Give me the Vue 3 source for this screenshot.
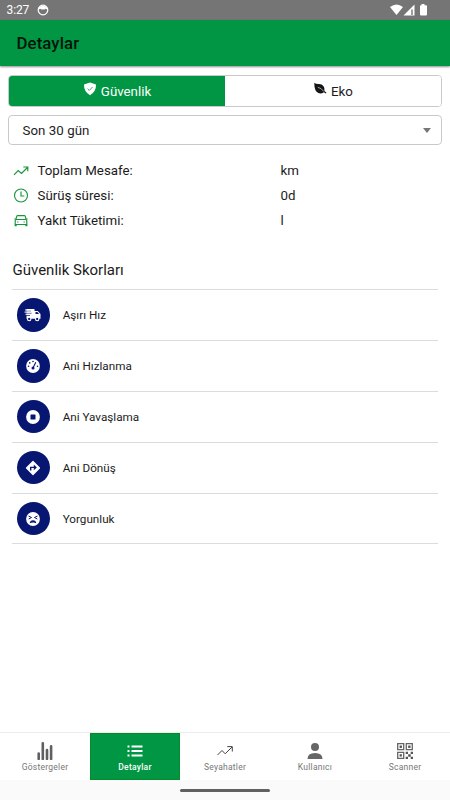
<script setup>
const stats = [
  { icon: 'trend', label: 'Toplam Mesafe:', value: 'km' },
  { icon: 'clock', label: 'Sürüş süresi:', value: '0d' },
  { icon: 'car', label: 'Yakıt Tüketimi:', value: 'l' },
]
const scores = [
  { icon: 'truck', label: 'Aşırı Hız' },
  { icon: 'gauge', label: 'Ani Hızlanma' },
  { icon: 'stop', label: 'Ani Yavaşlama' },
  { icon: 'turn', label: 'Ani Dönüş' },
  { icon: 'tired', label: 'Yorgunluk' },
]
const tabs = [
  { icon: 'bars', label: 'Göstergeler' },
  { icon: 'list', label: 'Detaylar', active: true },
  { icon: 'trend', label: 'Seyahatler' },
  { icon: 'user', label: 'Kullanıcı' },
  { icon: 'qr', label: 'Scanner' },
]
</script>

<template>
  <div class="screen">
    <div class="status">
      <span class="time">3:27</span>
      <svg class="face" viewBox="0 0 12 12"><circle cx="6" cy="6" r="4.800" fill="none" stroke="#fff" stroke-width="1.200" /><path d="M1.800 5.500V3.500Q6 -.2 10.200 3.500V5.500L8.500 4.700L7.500 5.400H4.500L3.500 4.700Z" fill="#fff" /></svg>
      <svg class="signals" viewBox="0 0 38 12">
        <path d="M0 3Q6.500-2 13 3L6.500 11Z" fill="#fff" />
        <path d="M13.500 11.500L24.500 .5V11.500Z" fill="#fff" /><path d="M21.300 5.500h1.400v5.500h-1.400z" fill="#757575" />
        <path d="M31.500 0h3v1.200H36q1 0 1 1V10.500q0 1-1 1h-5q-1 0-1-1V2.200q0-1 1-1h.5z" fill="#fff" />
      </svg>
    </div>
    <header class="appbar">Detaylar</header>

    <main>
      <div class="segments">
        <button class="segment on">
          <svg viewBox="0 0 14 14"><path d="M7 .5L13 2.500Q13.300 9.500 7 13.200Q.7 9.500 1 2.500Z" fill="#fff" /><path d="M4.600 6.800L6.300 8.400L9.600 5" fill="none" stroke="#009643" stroke-width=".8" /></svg>
          <span>Güvenlik</span>
        </button>
        <button class="segment">
          <svg viewBox="0 0 14 14"><path d="M1.300 .8Q2.500 2.200 6 2.100Q12 2.500 11.500 9.100L13.500 10.800L12.900 11.600L10.900 10.200Q7 13 3.500 9.700Q1.300 7.500 1.300 .8Z" fill="#151515" /><path d="M4.800 5.300Q8.500 6 10.800 9.500" fill="none" stroke="#fff" stroke-width=".6" /></svg>
          <span>Eko</span>
        </button>
      </div>

      <div class="select"><span>Son 30 gün</span><i class="caret"></i></div>

      <div class="stats">
        <div v-for="s in stats" :key="s.label" class="stat">
          <svg class="stat-icon" viewBox="0 0 16 16" fill="none" stroke="#16963c" stroke-width="1.150">
            <path v-if="s.icon === 'trend'" d="M1 11.800L5.200 7.500L8.500 10.500L14.500 4.500M10.300 4H14.800V8.300" />
            <template v-else-if="s.icon === 'clock'"><circle cx="8" cy="7.500" r="6.500" /><path d="M8 3.500V8H11.300" /></template>
            <template v-else><path d="M2.800 6.500L3.800 3.100Q4 2.600 4.600 2.600H11.400Q12 2.600 12.200 3.100L13.200 6.500M2.200 11.500V7.700L3.100 6.500H12.900L13.800 7.700V11.500Z" /><path d="M2.700 11.500V13.300M13.300 11.500V13.300" stroke-width="2" /><path d="M4.200 9h1.300M10.500 9h1.300M1.300 6H2.800M13.200 6H14.700" /></template>
          </svg>
          <span class="stat-label">{{ s.label }}</span>
          <span>{{ s.value }}</span>
        </div>
      </div>

      <h2>Güvenlik Skorları</h2>
      <ul class="scores">
        <li v-for="s in scores" :key="s.label">
          <span class="badge">
            <svg viewBox="0 0 18 18">
              <template v-if="s.icon === 'truck'">
                <path d="M2.500 3H10.500V5H13.700L16.500 8V12.700H2.500Z" fill="#fff" />
                <path d="M0 5h7M1 7.200h6.500M0 9.400h6" stroke="#071771" stroke-width=".8" />
                <path d="M1 4h6M.5 6.100h6.500M1.500 8.300h5" stroke="#fff" stroke-width="1" />
                <path d="M11.500 6.100h1.800l1.900 2h-3.700z" fill="#071771" />
                <circle cx="5.200" cy="13" r="1.700" fill="#071771" stroke="#fff" stroke-width="1.100" /><circle cx="13.200" cy="13" r="1.700" fill="#071771" stroke="#fff" stroke-width="1.100" />
              </template>
              <template v-else-if="s.icon === 'gauge'">
                <circle cx="9" cy="9" r="6.900" fill="#fff" /><g fill="#071771"><circle cx="9" cy="4.500" r=".8" /><circle cx="5.700" cy="5.900" r=".8" /><circle cx="4.500" cy="9.200" r=".8" /><circle cx="13.500" cy="9.200" r=".8" /><circle cx="9" cy="11" r="1.500" /></g><path d="M9 11L11.800 5.300" stroke="#071771" stroke-width="1.100" />
              </template>
              <template v-else-if="s.icon === 'stop'"><circle cx="9" cy="9" r="6.900" fill="#fff" /><rect x="6.500" y="6.500" width="5" height="5" rx=".5" fill="#071771" /></template>
              <template v-else-if="s.icon === 'turn'"><path d="M9 2.500L15.500 9L9 15.500L2.500 9Z" fill="#fff" stroke="#fff" stroke-width="1.200" stroke-linejoin="round" /><path d="M6.700 11.500V8.400H10.500" fill="none" stroke="#071771" stroke-width="1.400" /><path d="M9.800 5.600L12.900 8.400L9.800 11.200Z" fill="#071771" /></template>
              <template v-else><circle cx="9" cy="9" r="6.900" fill="#fff" /><path d="M4.500 6L7.500 7.500L4.700 9M13.500 6L10.500 7.500L13.300 9" fill="none" stroke="#071771" stroke-width="1" /><path d="M5.700 13.200Q6 10.200 9 10.200T12.300 13.200Q9 11.900 5.700 13.200Z" fill="#071771" /></template>
            </svg>
          </span>
          <span>{{ s.label }}</span>
        </li>
      </ul>
    </main>

    <nav>
      <a v-for="t in tabs" :key="t.label" :class="{ active: t.active }">
        <svg viewBox="0 0 18 18">
          <path v-if="t.icon === 'bars'" d="M2.700 17V11.500M6.800 17V1.300M11 17V8M15.100 17V4.200" stroke="#606060" stroke-width="2.600" stroke-linecap="round" />
          <path v-else-if="t.icon === 'list'" d="M1.500 4.500h2M1.500 9h2M1.500 13.500h2M5.500 4.500h11M5.500 9h11M5.500 13.500h11" stroke="#fff" stroke-width="1.800" />
          <path v-else-if="t.icon === 'trend'" d="M1.500 13L6 8.500L9.200 11.800L16 5M11.300 4.600H16.300V9.500" fill="none" stroke="#444" stroke-width="1" />
          <g v-else-if="t.icon === 'user'" fill="#666"><circle cx="9" cy="4.900" r="4" /><path d="M1.500 17Q1.500 11 9 11T16.500 17Z" /></g>
          <g v-else><path d="M1.700 1.700h6v6h-6zM10.300 1.700h6v6h-6zM1.700 10.300h6v6h-6z" fill="none" stroke="#666" stroke-width="1.300" /><path d="M3.600 3.600h2.300v2.300H3.600zM12.200 3.600h2.300v2.300h-2.300zM3.600 12.200h2.300v2.300H3.600zM9.700 9.700H12V12H9.700zM14.700 9.700H17V12h-2.300zM12.200 12.200h2.500v2.500h-2.500zM9.700 14.700H12V17H9.700zM14.700 14.700H17V17h-2.300z" fill="#555" /></g>
        </svg>
        <span>{{ t.label }}</span>
      </a>
    </nav>
    <footer><i></i></footer>
  </div>
</template>

<style>
body { margin: 0; }
</style>

<style scoped>
.screen { width: 450px; height: 800px; display: flex; flex-direction: column; background: #fff; color: #1c1c1c; font-family: Roboto, sans-serif; overflow: hidden; }
.status { height: 20px; background: #757575; color: #fff; display: flex; align-items: center; box-sizing: border-box; padding: 0 22px 0 6.500px; }
.time { font-size: 12px; line-height: 20px; letter-spacing: -.1px; }
.face { width: 12px; height: 12px; margin-left: 8px; }
.signals { width: 38px; height: 12px; margin-left: auto; }
.appbar { height: 46px; background: #009643; color: #05140a; font-size: 16.800px; font-weight: 500; line-height: 47px; padding-left: 16.500px; letter-spacing: .1px; box-shadow: 0 1px 2px rgba(0, 0, 0, .45); z-index: 1; }
main { flex: 1; padding: 9px 8px 0; }
.segments { height: 32px; display: flex; box-sizing: border-box; border: 1px solid #c8cac8; border-radius: 4px; overflow: hidden; }
.segment { flex: 1; display: flex; align-items: center; justify-content: center; gap: 4px; padding: 0; border: 0; background: #fff; color: #1c1c1c; font: 13.300px Roboto, sans-serif; }
.segment svg { width: 14px; height: 14px; margin-bottom: 4px; }
.segment.on { background: #009643; color: #fff; }
.select { height: 30px; margin-top: 8px; box-sizing: border-box; border: 1px solid #c8cac8; border-radius: 4px; display: flex; align-items: center; justify-content: space-between; padding: 0 10px 0 13.500px; font-size: 13.300px; letter-spacing: .05px; }
.caret { width: 0; height: 0; border: 4.500px solid transparent; border-top: 5px solid #777; border-bottom: 0; }
.stats { padding: 13px 0 0 4.500px; }
.stat { height: 25px; display: flex; align-items: center; font-size: 13.300px; }
.stat-icon { width: 16px; height: 16px; }
.stat-label { width: 243px; margin-left: 9px; }
h2 { margin: 27px 0 0 4.500px; height: 29px; font-size: 15px; font-weight: 400; line-height: 20px; }
.scores { list-style: none; margin: 0 4px; padding: 0; border-top: 1px solid #dcdcdc; }
.scores li { height: 50.900px; box-sizing: border-box; border-bottom: 1px solid #dcdcdc; padding-left: 4.700px; display: flex; align-items: center; gap: 12.600px; font-size: 11.700px; }
.badge { width: 33.400px; height: 33.400px; border-radius: 50%; background: #071771; display: flex; align-items: center; justify-content: center; }
.badge svg { width: 18px; height: 18px; }
nav { height: 48px; box-sizing: border-box; border-top: 1px solid #ececec; display: flex; }
nav a { flex: 1; display: flex; flex-direction: column; align-items: center; padding-top: 9px; box-sizing: border-box; font-size: 8.500px; line-height: 12px; letter-spacing: .25px; color: #777; }
nav a svg { width: 18px; height: 18px; margin-bottom: 1px; }
nav a.active { background: #009643; color: #fff; font-weight: 500; box-shadow: inset 0 0 0 1px #078a28; }
footer { height: 20px; background: #fafafa; display: flex; justify-content: center; align-items: center; }
footer i { width: 90px; height: 3px; border-radius: 2px; background: #606060; }
</style>
